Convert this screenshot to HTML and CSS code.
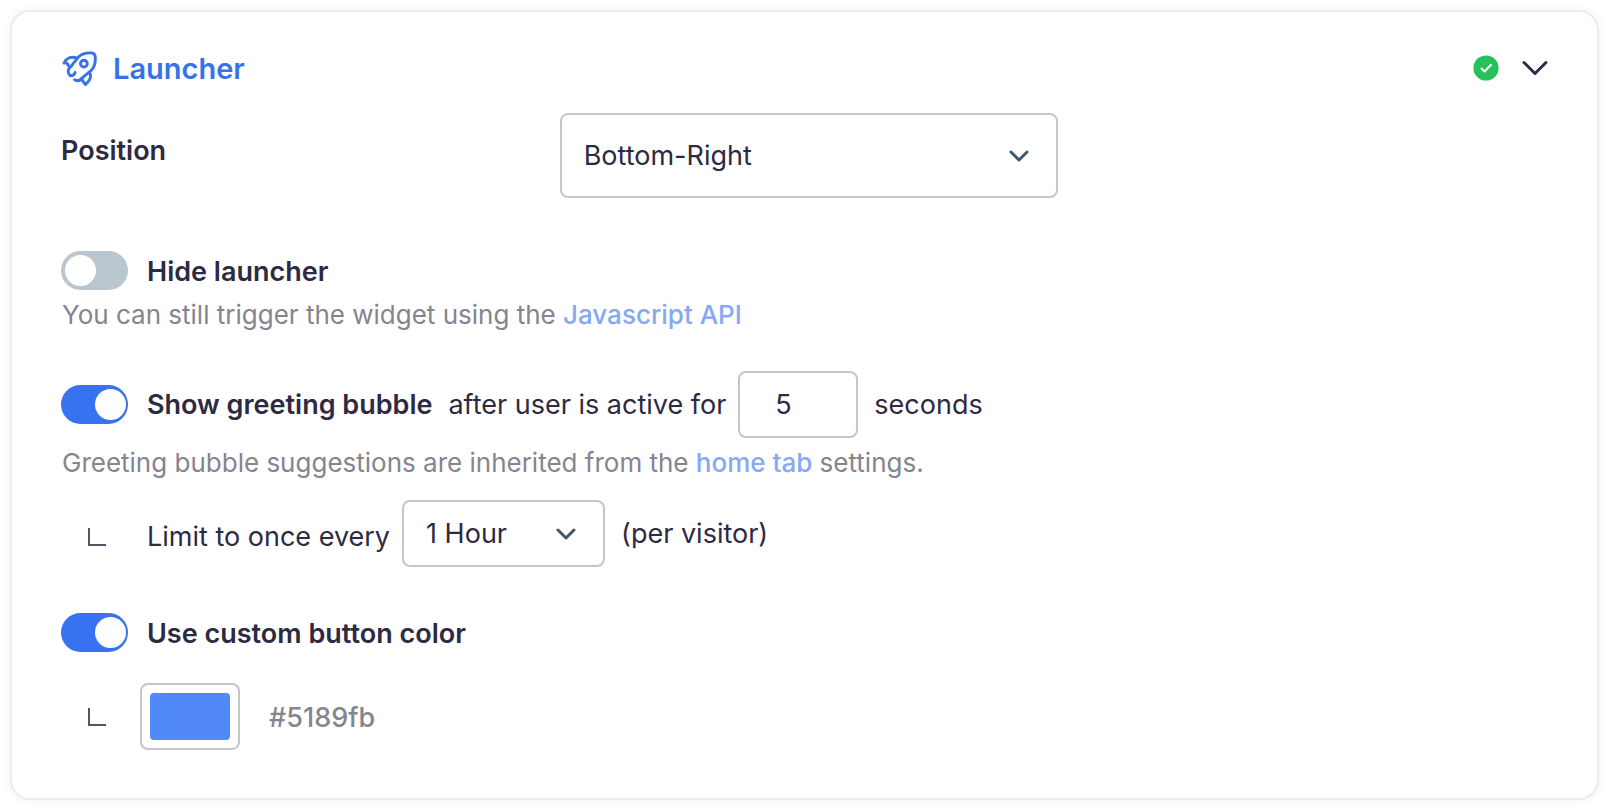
FILE: index.html
```html
<!DOCTYPE html>
<html lang="en">
<head>
<meta charset="utf-8">
<meta name="viewport" content="width=device-width, initial-scale=1">
<title>Launcher</title>
<link rel="stylesheet" href="styles.css">
</head>
<body>
<main class="card">
  <header class="card-header">
    <svg class="rocket" viewBox="0 0 36 36" aria-hidden="true">
      <path d="M9.5 15.500 L17 6 C21 2.200 26 1.600 31 2 C33.500 2.300 34.300 4.500 34.300 8 C34.300 14 33.500 17 29.500 20.500 L20.500 28"/>
      <path d="M15 7 C9 5.500 4 7.500 2 12.500 C4 11.500 6 12.500 6.500 15"/>
      <path d="M9.500 15.500 C5.500 18.500 5.500 22.500 8.500 25.500 C11.500 25.500 13 24 13.500 22"/>
      <path d="M13 29.500 C15.500 31 18.500 30.500 20.500 28 C20.500 31 22.500 32 24 34.500 C27.500 31.500 30.500 28 29 23.500 L28 21.800"/>
      <circle cx="22.500" cy="13" r="3.500"/>
    </svg>
    <h1 class="card-title">Launcher</h1>
    <svg class="status" viewBox="0 0 26 26" role="img" aria-label="Enabled">
      <circle cx="13" cy="13" r="12.600"/>
      <path d="M8.500 13.500 L11.500 16.500 L18 9.800"/>
    </svg>
    <button class="collapse" type="button" aria-label="Collapse section">
      <svg viewBox="0 0 26 16" aria-hidden="true"><path d="M2 2.500 L13 13.500 L24 2.500"/></svg>
    </button>
  </header>

  <form class="settings">
    <div class="position">
      <label class="label" for="position">Position</label>
      <div class="select select-large">
        <select id="position"><option>Bottom-Right</option><option>Bottom-Left</option></select>
        <svg viewBox="0 0 20 12" aria-hidden="true"><path d="M2 2 L10 10 L18 2"/></svg>
      </div>
    </div>

    <section class="group group-hide">
      <div class="row">
        <input class="toggle" type="checkbox" id="hide">
        <label class="label" for="hide">Hide launcher</label>
      </div>
      <p class="hint">You can still trigger the widget using the <a href="#api">Javascript API</a></p>
    </section>

    <section class="group group-greeting">
      <div class="row row-field">
        <input class="toggle" type="checkbox" id="greeting" checked>
        <label class="label" for="greeting">Show greeting bubble</label>
        <label class="text" for="delay">after user is active for</label>
        <input class="number" type="text" inputmode="numeric" id="delay" value="5">
        <span class="text">seconds</span>
      </div>
      <p class="hint">Greeting bubble suggestions are inherited from the <a href="#home">home tab</a> settings.</p>
      <div class="row row-field row-nested">
        <span class="branch"></span>
        <label class="text limit" for="limit">Limit to once every</label>
        <div class="select select-small">
          <select id="limit"><option>1 Hour</option><option>1 Day</option></select>
          <svg viewBox="0 0 20 12" aria-hidden="true"><path d="M2 2 L10 10 L18 2"/></svg>
        </div>
        <span class="text">(per visitor)</span>
      </div>
    </section>

    <section class="group">
      <div class="row">
        <input class="toggle" type="checkbox" id="custom" checked>
        <label class="label" for="custom">Use custom button color</label>
      </div>
      <div class="row row-field row-color">
        <span class="branch"></span>
        <input class="color" type="color" id="color" value="#5189fb">
        <label class="hex" for="color">#5189fb</label>
      </div>
    </section>
  </form>
</main>
</body>
</html>
```
FILE: styles.css
```css
* {
  box-sizing: border-box;
}

body {
  margin: 0;
  padding: 10px;
  background: #fff;
  color: #2d2a42;
  font: 400 27px/36px Inter, "Liberation Sans", sans-serif;
}

input,
select,
button {
  margin: 0;
  color: inherit;
  font: inherit;
}

svg {
  flex: none;
  fill: none;
  stroke: currentColor;
  stroke-linecap: round;
  stroke-linejoin: round;
}

.card {
  padding: 36px 40px 48px 49px;
  border: 2px solid #ececed;
  border-radius: 20px;
  box-shadow: 0 0 12px rgba(0, 0, 0, 0.05);
}

.card-header {
  display: flex;
  align-items: center;
  height: 40px;
  padding-right: 9px;
}

.rocket {
  width: 35px;
  height: 35px;
  margin-left: 1px;
  color: #3772ea;
  stroke-width: 3;
}

.card-title {
  margin: 0 auto 0 16px;
  padding-top: 2px;
  color: #3772ea;
  font-size: 29px;
  font-weight: 600;
}

.status {
  width: 26px;
  height: 26px;
}

.status circle {
  fill: #27c15c;
  stroke: none;
}

.status path {
  stroke: #fff;
  stroke-width: 2;
}

.collapse {
  display: flex;
  margin-left: 23px;
  padding: 0;
  border: 0;
  background: none;
}

.collapse svg {
  width: 26px;
  height: 16px;
  stroke-width: 3;
}

.position {
  display: grid;
  grid-template-columns: repeat(3, 1fr);
  margin-top: 25px;
}

.position .label {
  margin-top: 20px;
}

.label {
  font-weight: 600;
}

.select {
  display: grid;
  align-items: center;
}

.select select,
.select svg {
  grid-area: 1 / 1;
}

.select select {
  width: 100%;
  padding: 0 22px;
  border: 2px solid #c5c6cd;
  border-radius: 8px;
  appearance: none;
  background: #fff;
}

.select svg {
  width: 20px;
  height: 12px;
  margin-right: 29px;
  justify-self: end;
  color: #40566b;
  stroke-width: 3;
  pointer-events: none;
}

.select-large select {
  height: 85px;
}

.select-small {
  width: 203px;
}

.select-small select {
  height: 67px;
}

.group {
  margin-top: 45px;
}

.group-hide {
  margin-top: 52px;
}

.group-greeting {
  margin-top: 37px;
}

.row {
  display: flex;
  align-items: center;
  min-height: 40px;
}

.row .label {
  padding-top: 4px;
}

.row-field .label {
  padding-top: 0;
}

.row .text {
  margin-left: 16px;
}

.number,
.select-small {
  margin-left: 12px;
}

.row-field {
  height: 67px;
}

.toggle {
  display: flex;
  align-items: center;
  width: 67px;
  height: 39px;
  margin-right: 19px;
  padding: 0 2px 0 4px;
  border-radius: 20px;
  appearance: none;
  background: #bac6ce;
}

.toggle::before {
  width: 31px;
  height: 31px;
  border-radius: 50%;
  background: #fff;
  content: "";
}

.toggle:checked {
  justify-content: flex-end;
  background: #3772f0;
}

.hint {
  margin: 7px 0 0 1px;
  color: #85848f;
  font-size: 26px;
}

.hint a {
  color: #86a8f5;
  font-weight: 500;
  text-decoration: none;
}

.group-greeting {
  margin-top: 38px;
}

.number {
  width: 120px;
  height: 67px;
  padding: 0 35px;
  border: 2px solid #c5c6cd;
  border-radius: 8px;
}

.row-nested {
  margin-top: 19px;
}

.branch {
  width: 18px;
  height: 18px;
  margin-left: 27px;
  border: solid #55536a;
  border-width: 0 0 2px 2px;
}

.row-nested .branch,
.row-nested .limit {
  margin-top: 6px;
}

.row .limit {
  margin-left: 41px;
}

.row-color {
  margin-top: 31px;
}

.color {
  width: 100px;
  height: 67px;
  margin-left: 34px;
  padding: 8px;
  border: 2px solid #c5c6cd;
  border-radius: 8px;
  appearance: none;
  background: #fff;
}

.color::-webkit-color-swatch-wrapper {
  padding: 0;
}

.color::-webkit-color-swatch {
  border: 0;
  border-radius: 4px;
}

.hex {
  margin-left: 29px;
  padding-top: 2px;
  color: #85848f;
  font-weight: 500;
}
```
